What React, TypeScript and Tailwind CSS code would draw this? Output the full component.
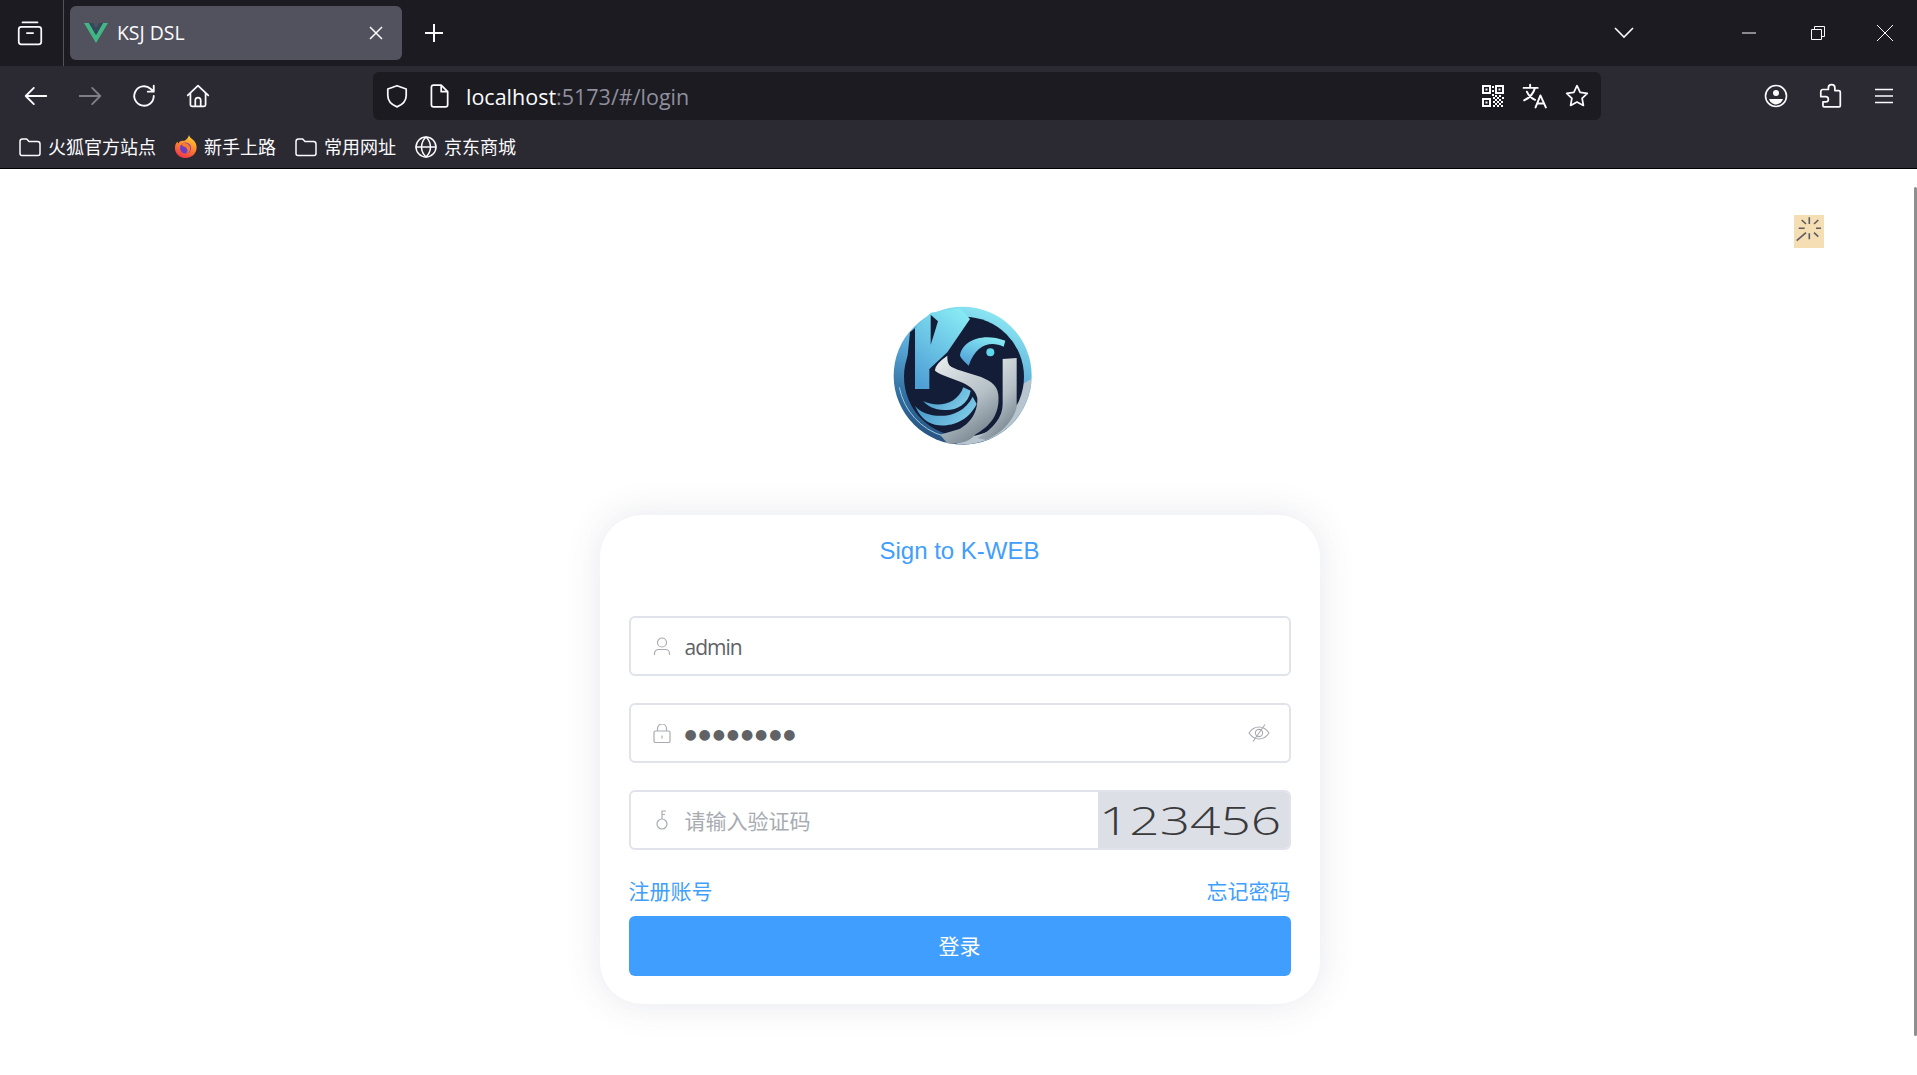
import React from "react";

const cjk = "font-['Noto_Sans','Noto_Sans_CJK_SC',sans-serif]";

const Glyph = ({ size = 24, className = "", sw = 1.6, children }: { size?: number; className?: string; sw?: number; children: React.ReactNode }) => (
  <svg width={size} height={size} viewBox="0 0 24 24" fill="none" stroke="currentColor" strokeWidth={sw} strokeLinecap="round" strokeLinejoin="round" className={className}>
    {children}
  </svg>
);

const FolderIcon = () => (
  <Glyph size={24} sw={1.5}>
    <path d="M2 6.5A2.5 2.5 0 0 1 4.500 4h4.200l2.300 2.500h8.500A2.500 2.500 0 0 1 22 9v9.500a2 2 0 0 1-2 2H4a2 2 0 0 1-2-2z" />
  </Glyph>
);

const FirefoxIcon = () => (
  <svg width="24" height="26" viewBox="0 0 24 26">
    <defs>
      <linearGradient id="ff" x1="0.7" y1="0" x2="0.3" y2="1">
        <stop offset="0" stopColor="#ffd43a" />
        <stop offset="0.45" stopColor="#ff8a2b" />
        <stop offset="1" stopColor="#f0304e" />
      </linearGradient>
    </defs>
    <path d="M15 1c.5 3 4 4 6 7 2.500 4 2 9-1 12.500-3 3-8 4.500-12 3C3.500 22 .5 18 1 13c.2-2.500 1-4 2.500-5.500 0 1 .5 1.500 1 2C5.500 7 8 6.500 10 7c2-1 4.500-3 5-6z" fill="url(#ff)" />
    <circle cx="11.500" cy="14" r="5.500" fill="#6b3fc4" />
    <path d="M7 10c3-2 8-1 9 3 .6 3-1 6-4 6.500 2-1.500 2-4 .5-5.500-1.500-1.500-4-1.500-5.500-4z" fill="#ff7a2b" />
  </svg>
);

const Bookmark = ({ icon, label }: { icon: React.ReactNode; label: string }) => (
  <div className="flex items-center gap-[6px] h-[30px] text-[#fbfbfe]">
    <span className="w-[24px] flex justify-center">{icon}</span>
    <span className={`text-[18px] leading-[26px] ${cjk}`}>{label}</span>
  </div>
);

const ToolBtn = ({ w = "w-[54px]", children }: { w?: string; children: React.ReactNode }) => (
  <div className={`${w} h-[48px] flex items-center justify-center shrink-0`}>{children}</div>
);

const Logo = () => (
  <svg width="142" height="142" viewBox="96 46 426 426" className="ml-[8px]">
    <defs>
      <linearGradient id="ring" x1="0.7" y1="0" x2="0.3" y2="1">
        <stop offset="0" stopColor="#8eeaf4" />
        <stop offset="0.45" stopColor="#5aa9d8" />
        <stop offset="0.8" stopColor="#2f6a9c" />
        <stop offset="1" stopColor="#28507c" />
      </linearGradient>
      <linearGradient id="kk" x1="0.7" y1="0" x2="0.2" y2="1">
        <stop offset="0" stopColor="#86e8f3" />
        <stop offset="1" stopColor="#4f9fd6" />
      </linearGradient>
      <linearGradient id="silver" x1="0.1" y1="0" x2="0.6" y2="1">
        <stop offset="0" stopColor="#e8eced" />
        <stop offset="0.6" stopColor="#b5bfc6" />
        <stop offset="1" stopColor="#76858f" />
      </linearGradient>
      <linearGradient id="arc" x1="0" y1="0" x2="1" y2="0.4">
        <stop offset="0" stopColor="#3d8fc6" />
        <stop offset="1" stopColor="#7cc8e6" />
      </linearGradient>
    </defs>
    <circle cx="308" cy="255" r="207" fill="url(#ring)" />
    <path d="M514 265A207 207 0 0 1 290 461L300 430L470 290Z" fill="#b8c5ce" />
    <circle cx="312" cy="258" r="180" fill="#141d38" />
    <path d="M150 125L170 108L170 262L136 262Z" fill="#141d38" />
    <path d="M118 290A190 190 0 0 0 250 436" fill="none" stroke="#9ccbe2" strokeWidth="3" />
    <path d="M165 112L212 66L300 52L330 85L262 185L208 235L208 295L165 295Z" fill="url(#kk)" />
    <path d="M212 72L234 92L212 163Z" fill="#141d38" />
    <path d="M300 195C304 155 362 122 436 150L431 168C392 150 348 160 326 225C316 215 304 205 300 195Z" fill="url(#kk)" />
    <circle cx="391" cy="185" r="12" fill="#5fd6ea" />
    <path d="M190 332C230 350 290 345 310 290L332 300C325 340 290 358 260 358C225 360 200 345 190 332Z" fill="url(#arc)" />
    <path d="M165 345C195 385 300 395 338 318L350 340C320 400 260 410 225 402C195 395 175 370 165 345Z" fill="url(#arc)" />
    <path d="M262 195C240 210 225 225 225 240C262 268 342 270 352 322C354 370 325 402 296 416L240 432L262 458C300 462 330 452 345 432C392 405 420 370 415 312C410 250 300 252 268 224C262 215 262 205 262 195Z" fill="url(#silver)" />
    <path d="M428 205L470 202L470 350C460 392 420 432 378 448L352 442C400 415 428 380 428 340Z" fill="url(#silver)" />
  </svg>
);

const FormRow = ({ children, className = "" }: { children: React.ReactNode; className?: string }) => (
  <div className={`h-[60px] flex items-center border-2 border-[#e1e3ea] rounded-[6px] bg-white overflow-hidden ${className}`}>{children}</div>
);

const inputCls = "flex-1 min-w-0 h-full pt-[2px] outline-none bg-transparent text-[#606266] placeholder:text-[#a8abb2]";

export default function App() {
  return (
    <div className="w-full h-screen overflow-hidden flex flex-col bg-white relative">
      {/* tab strip */}
      <div className="h-[66px] shrink-0 bg-[#1c1b22] flex items-center text-[#fbfbfe]">
        <div className="w-[64px] h-full flex items-center justify-center pr-[3px] border-r border-[#52525e]">
          <Glyph size={30} sw={1.4}>
            <path d="M6 3.500h12M3 9a2 2 0 0 1 2-2h14a2 2 0 0 1 2 2v10a2 2 0 0 1-2 2H5a2 2 0 0 1-2-2zM9.500 12h5" />
          </Glyph>
        </div>
        <div className="ml-[6px] w-[332px] h-[54px] rounded-[6px] bg-[#52525e] flex items-center pl-[14px] pr-[19px]">
          <svg width="24" height="22" viewBox="0 0 24 22">
            <path d="M0 1h5l7 12 7-12h5L12 21z" fill="#41b883" />
            <path d="M5 1h4l3 5 3-5h4l-7 12z" fill="#35495e" />
          </svg>
          <span className="ml-[9px] text-[19.4px] font-['Open_Sans',sans-serif]">KSJ DSL</span>
          <svg width="14" height="14" viewBox="0 0 14 14" className="ml-auto" stroke="currentColor" strokeWidth="1.500">
            <path d="M1 1l12 12M13 1L1 13" />
          </svg>
        </div>
        <svg width="18" height="18" viewBox="0 0 18 18" className="ml-[23px]" stroke="currentColor" strokeWidth="2">
          <path d="M9 0v18M0 9h18" />
        </svg>
        <svg width="20" height="12" viewBox="0 0 20 12" className="ml-auto" fill="none" stroke="currentColor" strokeWidth="1.600">
          <path d="M1 1l9 9 9-9" />
        </svg>
        <div className="ml-[108px] mr-[24px] flex items-center gap-[55px]">
          <svg width="14" height="14" viewBox="0 0 14 14" stroke="currentColor" strokeWidth="1"><path d="M0 7h15" /></svg>
          <svg width="14" height="14" viewBox="0 0 14 14" fill="none" stroke="currentColor" strokeWidth="1">
            <path d="M.5 3.500h10v10H.5zM3.500 3.500V.5h10v10h-3" />
          </svg>
          <svg width="16" height="16" viewBox="0 0 16 16" className="-ml-[3px]" stroke="currentColor" strokeWidth="1"><path d="M0 0l16 16M16 0L0 16" /></svg>
        </div>
      </div>

      {/* nav bar */}
      <div className="h-[60px] shrink-0 bg-[#2b2a33] flex items-center pl-[9px] pr-[6px] text-[#fbfbfe]">
        <ToolBtn>
          <Glyph size={26} sw={1.7}><path d="M2.500 12h19M10 4.500L2.500 12l7.500 7.500" /></Glyph>
        </ToolBtn>
        <ToolBtn>
          <Glyph size={26} sw={1.7} className="opacity-40"><path d="M2.500 12h19M14 4.500l7.500 7.500-7.500 7.500" /></Glyph>
        </ToolBtn>
        <ToolBtn>
          <Glyph size={26} sw={1.7}><path d="M21 12a9 9 0 1 1-3-6.700L21 8M21 2.500V8h-5.500" /></Glyph>
        </ToolBtn>
        <ToolBtn>
          <Glyph size={26} sw={1.6}><path d="M2.500 11.500L12 2.500l9.500 9M5 9.500V20a1.500 1.500 0 0 0 1.500 1.500h11A1.500 1.500 0 0 0 19 20V9.500M9.500 21.500V16a2.500 2.500 0 0 1 5 0v5.500" /></Glyph>
        </ToolBtn>
        <div className="ml-[148px] w-[1228px] h-[48px] rounded-[6px] bg-[#1c1b22] flex items-center pr-[3px]">
          <ToolBtn w="w-[48px]">
            <Glyph size={26} sw={1.6}><path d="M12 2.500l8.500 3v6c0 5-3.500 8.500-8.500 10.500-5-2-8.500-5.500-8.500-10.500v-6z" /></Glyph>
          </ToolBtn>
          <ToolBtn w="w-[36px]">
            <Glyph size={26} sw={1.6}><path d="M5 4a2 2 0 0 1 2-2h7l6 6v12a2 2 0 0 1-2 2H7a2 2 0 0 1-2-2zM14 2v6h6" /></Glyph>
          </ToolBtn>
          <span className="ml-[9px] pt-[2px] text-[21.5px] font-['Open_Sans',sans-serif]">
            localhost<span className="text-[#8f8f9d]">:5173/#/login</span>
          </span>
          <div className="ml-auto flex">
            <ToolBtn w="w-[42px]">
              <svg width="22" height="22" viewBox="0 0 22 22" fill="currentColor">
                <path fillRule="evenodd" d="M0 0h9v9H0zM2 2v5h5V2zM13 0h9v9h-9zM15 2v5h5V2zM0 13h9v9H0zM2 15v5h5v-5z" />
                <path d="M3.500 3.500h2v2h-2zM16.500 3.500h2v2h-2zM3.500 16.500h2v2h-2zM10 1h2v2h-2zM10 5h2v2h-2zM10 9h2v2h-2zM13 10h2v2h-2zM17 10h2v2h-2zM20 12h2v2h-2zM15 12h2v2h-2zM11 12h2v2h-2zM13 14h2v2h-2zM17 14h2v2h-2zM11 16h2v2h-2zM15 16h2v2h-2zM19 16h2v2h-2zM13 18h2v2h-2zM17 18h2v2h-2zM11 20h2v2h-2zM15 20h2v2h-2zM19 20h2v2h-2z" />
              </svg>
            </ToolBtn>
            <ToolBtn w="w-[42px]">
              <Glyph size={26} sw={1.8}><path d="M1.500 4.500h13M7.500 1.500v3M12 4.500C10.500 10 6.500 14 2 16M4.500 8c1.500 3.500 4 6 7.500 7.500M12.500 22.500l4.500-11 5 11M14 19h6.500" /></Glyph>
            </ToolBtn>
            <ToolBtn w="w-[42px]">
              <Glyph size={26} sw={1.6}><path d="M12 2.500l2.900 6.100 6.600.9-4.800 4.600 1.200 6.600L12 17.500l-5.900 3.200 1.200-6.600L2.500 9.500l6.600-.9z" /></Glyph>
            </ToolBtn>
          </div>
        </div>
        <div className="ml-auto flex">
          <ToolBtn>
            <svg width="24" height="24" viewBox="0 0 24 24" fill="none" stroke="currentColor" strokeWidth="1.600">
              <circle cx="12" cy="12" r="10.500" />
              <circle cx="12" cy="9" r="3" fill="currentColor" stroke="none" />
              <path d="M5 15h14c-1 3-4 5.500-7 5.500S6 18 5 15z" fill="currentColor" stroke="none" />
            </svg>
          </ToolBtn>
          <ToolBtn>
            <Glyph size={26} sw={1.6}><path d="M10.500 6V4.500a3 3 0 0 1 6 0V7H20a1.500 1.500 0 0 1 1.500 1.500V21a1 1 0 0 1-1 1H6.500a1 1 0 0 1-1-1v-3.500H8a2.500 2.500 0 0 0 0-5H3.500V8A2 2 0 0 1 5.500 6z" /></Glyph>
          </ToolBtn>
          <ToolBtn>
            <svg width="20" height="16" viewBox="0 0 20 16" stroke="currentColor" strokeWidth="1.600"><path d="M1 1.500h18M1 8h18M1 14.500h18" /></svg>
          </ToolBtn>
        </div>
      </div>

      {/* bookmarks */}
      <div className="h-[42px] shrink-0 bg-[#2b2a33] flex items-center pl-[18px] pb-[1px] gap-[18px]">
        <Bookmark icon={<FolderIcon />} label="火狐官方站点" />
        <Bookmark icon={<FirefoxIcon />} label="新手上路" />
        <Bookmark icon={<FolderIcon />} label="常用网址" />
        <Bookmark
          icon={
            <Glyph size={24} sw={1.5}>
              <circle cx="12" cy="12" r="10" />
              <path d="M2 12h20M12 2c-6 6-6 14 0 20M12 2c6 6 6 14 0 20" />
            </Glyph>
          }
          label="京东商城"
        />
      </div>
      <div className="h-px shrink-0 bg-black" />

      {/* page */}
      <main className="flex-1 relative flex flex-col items-center pt-[137px]">
        <Logo />

        <div className="mt-[67px] ml-[2px] w-[720px] h-[489px] rounded-[42px] bg-white shadow-[0_0_36px_rgba(60,70,100,0.13)] px-[29px] flex flex-col">
          <h1 className="h-[70px] pt-[19px] text-center text-[24px] leading-[34px] text-[#409eff] font-['Liberation_Sans',sans-serif]">Sign to K-WEB</h1>

          <FormRow className="mt-[31px]">
            <span className="w-[54px] flex justify-end pr-[14px] text-[#a8abb2]">
              <svg width="18" height="18" viewBox="0 0 18 18" fill="none" stroke="currentColor" strokeWidth="1.200">
                <circle cx="9" cy="5.500" r="4.500" />
                <path d="M1.500 18v-1.500a4 4 0 0 1 4-4h7a4 4 0 0 1 4 4V18" />
              </svg>
            </span>
            <input readOnly defaultValue="admin" className={`${inputCls} text-[21px] tracking-[-1px] font-['Open_Sans',sans-serif]`} />
          </FormRow>

          <FormRow className="mt-[27px]">
            <span className="w-[54px] flex justify-end pr-[14px] text-[#a8abb2]">
              <svg width="18" height="19" viewBox="0 0 18 19" fill="none" stroke="currentColor" strokeWidth="1.200">
                <rect x="1" y="7" width="16" height="11.500" rx="1.500" />
                <path d="M4.500 7V4.500a4.500 4.500 0 0 1 9 0V7M9 11.500v3" />
              </svg>
            </span>
            <span className="flex-1 pt-[3px] text-[14px] tracking-[1.9px] text-[#606266] font-['DejaVu_Sans',sans-serif]">●●●●●●●●</span>
            <span className="pr-[19px] text-[#a8abb2]">
              <svg width="22" height="18" viewBox="0 0 22 18" fill="none" stroke="currentColor" strokeWidth="1.100">
                <path d="M1 9c3-4.500 6-6 10-6s7 1.500 10 6c-3 4.500-6 6-10 6s-7-1.500-10-6z" />
                <circle cx="11" cy="9" r="3.600" />
                <path d="M17 .5L5 17.500" />
              </svg>
            </span>
          </FormRow>

          <FormRow className="mt-[27px]">
            <span className="w-[54px] flex justify-end pr-[14px] text-[#a8abb2]">
              <svg width="18" height="20" viewBox="0 0 18 20" fill="none" stroke="currentColor" strokeWidth="1.200">
                <circle cx="9" cy="14" r="5" />
                <path d="M9 9V1h4M9 4.500h3" />
              </svg>
            </span>
            <input readOnly placeholder="请输入验证码" className={`${inputCls} text-[21px] ${cjk}`} />
            <div className="w-[191px] h-full bg-[#dcdfe6] flex items-center justify-center overflow-hidden pr-[6px]">
              <span className="text-[38px] leading-none text-[#3a3a3c] font-['Open_Sans',sans-serif] font-light scale-x-[1.4]">123456</span>
            </div>
          </FormRow>

          <div className={`mt-[26px] h-[30px] flex items-center justify-between text-[21px] leading-[30px] text-[#409eff] ${cjk}`}>
            <span>注册账号</span>
            <span>忘记密码</span>
          </div>

          <button className={`mt-[10px] h-[60px] pt-[2px] rounded-[6px] bg-[#409eff] text-white text-[21px] ${cjk}`}>登录</button>
        </div>

        {/* floating tool */}
        <div className="absolute right-[93px] top-[46px] w-[30px] h-[33px] bg-[#f5deb3] text-[#5c5c60]">
          <svg width="30" height="33" viewBox="0 0 30 33" stroke="currentColor" strokeWidth="1.600">
            <path d="M15.300 2.300v6.700M15.300 18.300v6M22 13.300h5M4.700 13.300h6M20 9l4.300-4M7.700 5L12 9M20 17.700l4.300 4M2.700 25.700L12 17.700" />
          </svg>
        </div>

        {/* scrollbar */}
        <div className="absolute right-0 top-[18px] bottom-[39px] w-[3px] rounded-full bg-[#8f8f8f]" />
      </main>
    </div>
  );
}
